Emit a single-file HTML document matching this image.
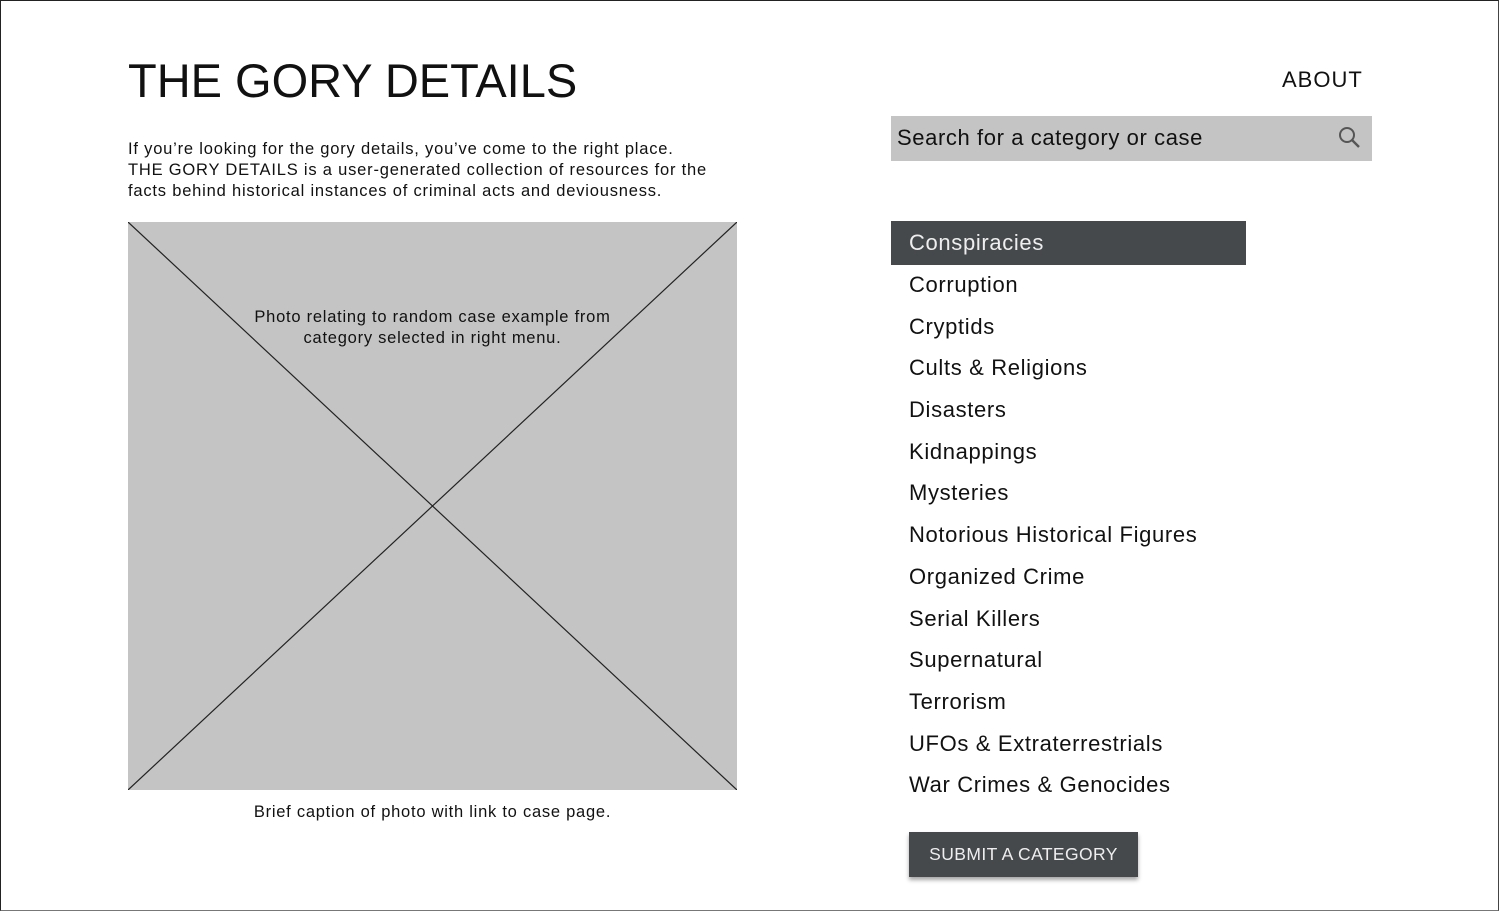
<!DOCTYPE html>
<html><head><style>
body{margin:0;width:1500px;height:912px;position:relative;background:#fff;font-family:"Liberation Sans",Arial,sans-serif;color:#111;overflow:hidden}
.frame{position:absolute;left:0;top:0;width:1497px;height:909px;border:1px solid #222;border-bottom-color:#777;border-right-color:#444}
.abs{position:absolute;white-space:nowrap}
h1{position:absolute;left:128px;top:54px;margin:0;font-weight:normal;font-size:47px;line-height:54px;color:#111}
.p{left:128px;top:139px;font-size:16.5px;line-height:21px;letter-spacing:0.8px}
.img{position:absolute;left:128px;top:222px;width:609px;height:568px;background:#c4c4c4}
.search{position:absolute;left:891px;top:116px;width:481px;height:45px;background:#c4c4c4}
.menu{position:absolute;left:891px;top:221px;width:355px}
.menu div{height:41.7px;line-height:40px;padding-left:18px;font-size:22px;color:#111;letter-spacing:0.65px}
.menu div.sel{background:#45494c;color:#eee;height:44px;line-height:44px}
.btn{position:absolute;left:909px;top:832px;width:229px;height:45px;background:#45494c;color:#eee;font-size:17.5px;line-height:45px;text-align:center;box-shadow:0 3px 4px rgba(0,0,0,.35);letter-spacing:0.4px}
</style></head><body>
<div class="frame"></div>
<h1>THE GORY DETAILS</h1>
<div class="abs" style="left:1282px;top:67px;font-size:22px;line-height:26px;letter-spacing:1px">ABOUT</div>
<div class="abs p">If you’re looking for the gory details, you’ve come to the right place.<br>THE GORY DETAILS is a user-generated collection of resources for the<br>facts behind historical instances of criminal acts and deviousness.</div>
<div class="img"><svg width="609" height="568" style="position:absolute;left:0;top:0"><line x1="0" y1="0" x2="609" y2="568" stroke="#222" stroke-width="1.2"/><line x1="609" y1="0" x2="0" y2="568" stroke="#222" stroke-width="1.2"/></svg>
<div class="abs" style="left:0;width:609px;top:85px;text-align:center;font-size:16.5px;line-height:21px;letter-spacing:0.75px">Photo relating to random case example from<br>category selected in right menu.</div></div>
<div class="abs" style="left:128px;width:609px;top:803px;text-align:center;font-size:16.5px;letter-spacing:0.75px">Brief caption of photo with link to case page.</div>
<div class="search"><div class="abs" style="left:6px;top:9px;font-size:22px;line-height:26px;letter-spacing:0.6px">Search for a category or case</div>
<svg width="26" height="26" style="position:absolute;left:446px;top:9px" viewBox="0 0 26 26"><circle cx="10" cy="10" r="7" fill="none" stroke="#555" stroke-width="2"/><line x1="15" y1="15" x2="22" y2="22" stroke="#555" stroke-width="2.4"/></svg></div>
<div class="menu">
<div class="sel">Conspiracies</div><div>Corruption</div><div>Cryptids</div><div>Cults &amp; Religions</div><div>Disasters</div><div>Kidnappings</div><div>Mysteries</div><div>Notorious Historical Figures</div><div>Organized Crime</div><div>Serial Killers</div><div>Supernatural</div><div>Terrorism</div><div>UFOs &amp; Extraterrestrials</div><div>War Crimes &amp; Genocides</div>
</div>
<div class="btn">SUBMIT A CATEGORY</div>
</body></html>
